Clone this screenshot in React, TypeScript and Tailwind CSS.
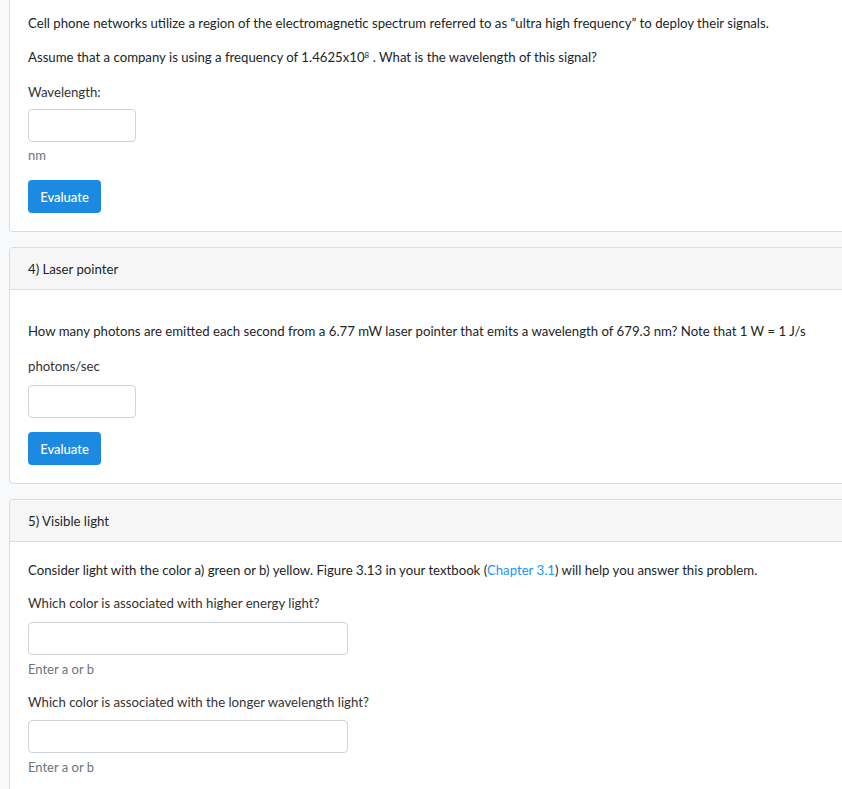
import React from 'react';

const inputCls =
  'block h-[33px] border border-[#ced4da] rounded-[4px] bg-white outline-none';

const EvaluateButton = () => (
  <button
    type="button"
    className="h-[33px] w-[73px] rounded-[4px] bg-[#1b8ae0] text-white text-[13px] font-medium"
  >
    Evaluate
  </button>
);

const CardHeader = ({ title }: { title: string }) => (
  <div className="h-[42px] flex items-center px-[18px] bg-[#f6f6f6] border-b border-[#dcdcdc] rounded-t-[4px]">
    <span className="text-[#212529]">{title}</span>
  </div>
);

export default function App() {
  return (
    <div className="min-h-[789px] bg-[#f8f9fa] overflow-hidden font-['Lato',sans-serif] text-[13.2px] leading-5 text-[#212529]">
      <div className="ml-[9px] w-[900px] flex flex-col gap-[15px]">
        {/* Question 3 (continued from above) */}
        <div className="bg-white border border-t-0 border-[#dcdcdc] rounded-b-[4px] px-[18px] pt-[13px] pb-[18px]">
          <p>
            Cell phone networks utilize a region of the electromagnetic spectrum referred to as
            “ultra high frequency” to deploy their signals.
          </p>
          <p className="mt-[14px]">
            Assume that a company is using a frequency of 1.4625x10
            <sup className="text-[8px]">8</sup> . What is the wavelength of this signal?
          </p>
          <p className="mt-[15px] text-[#333]">Wavelength:</p>
          <input className={`${inputCls} w-[108px] mt-[7px]`} />
          <p className="mt-[4px] text-[13px] leading-[18px] text-[#6c757d]">nm</p>
          <div className="mt-[16px]">
            <EvaluateButton />
          </div>
        </div>

        {/* Question 4 */}
        <div className="bg-white border border-[#dcdcdc] rounded-[4px]">
          <CardHeader title="4) Laser pointer" />
          <div className="px-[18px] pt-[31px] pb-[18px]">
            <p>
              How many photons are emitted each second from a 6.77 mW laser pointer that emits a
              wavelength of 679.3 nm? Note that 1 W = 1 J/s
            </p>
            <p className="mt-[15px] text-[#333]">photons/sec</p>
            <input className={`${inputCls} w-[108px] mt-[9px]`} />
            <div className="mt-[14px]">
              <EvaluateButton />
            </div>
          </div>
        </div>

        {/* Question 5 */}
        <div className="bg-white border border-[#dcdcdc] rounded-[4px]">
          <CardHeader title="5) Visible light" />
          <div className="px-[18px] pt-[18px] pb-[18px]">
            <p>
              Consider light with the color a) green or b) yellow. Figure 3.13 in your textbook (
              <a href="#" className="text-[#2196f3]">
                Chapter 3.1
              </a>
              ) will help you answer this problem.
            </p>
            <p className="mt-[13px] text-[#333]">Which color is associated with higher energy light?</p>
            <input className={`${inputCls} w-[320px] mt-[9px]`} />
            <p className="mt-[5px] text-[13px] leading-[18px] text-[#6c757d]">Enter a or b</p>
            <p className="mt-[14px] text-[#333]">
              Which color is associated with the longer wavelength light?
            </p>
            <input className={`${inputCls} w-[320px] mt-[8px]`} />
            <p className="mt-[5px] text-[13px] leading-[18px] text-[#6c757d]">Enter a or b</p>
          </div>
        </div>
      </div>
    </div>
  );
}
